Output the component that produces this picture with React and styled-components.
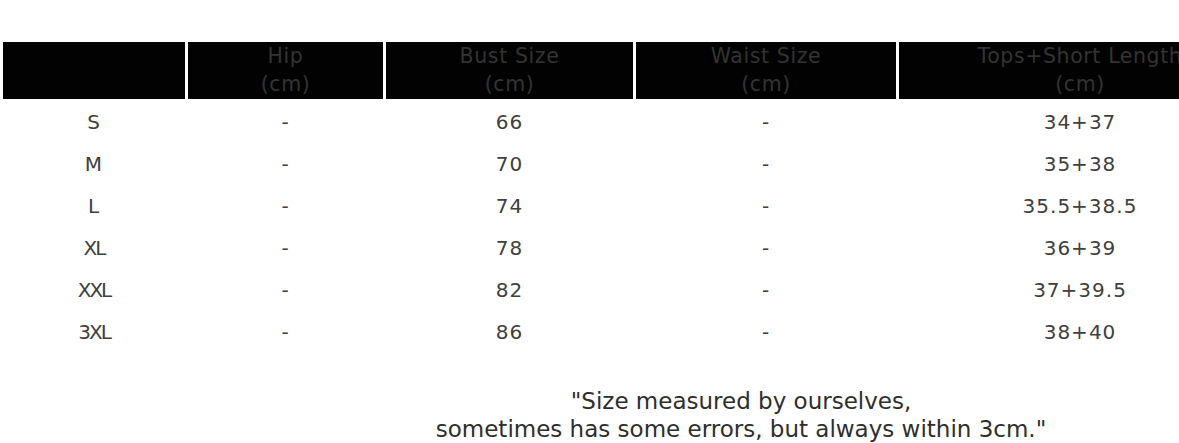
import React from "react";
import styled, { createGlobalStyle } from "styled-components";

const Global = createGlobalStyle`
  html, body { margin: 0; padding: 0; background: #fff; overflow: hidden; }
  body { font-family: "DejaVu Sans", Verdana, sans-serif; }
`;

const Page = styled.div`
  width: 1179px;
  height: 443px;
  overflow: hidden;
  padding-top: 42px;
  box-sizing: border-box;
`;

const Table = styled.div`
  display: grid;
  grid-template-columns: 182px 195px 247px 260px 362px;
  column-gap: 3px;
  padding-left: 3px;
  width: max-content;
`;

const HeadCell = styled.div`
  background: #020202;
  height: 57px;
  margin-bottom: 2px;
  display: flex;
  flex-direction: column;
  align-items: center;
  justify-content: center;
  color: #333;
  font-size: 20.5px;
  line-height: 28px;
  letter-spacing: 0.6px;
  white-space: nowrap;
  padding-bottom: 2px;
  box-sizing: border-box;
`;

const Cell = styled.div`
  height: 42px;
  display: flex;
  align-items: center;
  justify-content: center;
  color: #404040;
  font-size: 20px;
  letter-spacing: ${(p) => (p.$tight ? "-2px" : "1px")};
  white-space: nowrap;
`;

const Note = styled.div`
  margin-top: 34px;
  padding-left: 303px;
  text-align: center;
  color: #2e2e2e;
  font-size: 23px;
  line-height: 28px;
  white-space: nowrap;
`;

const NoteLine = styled.div``;

const headers = [
  [],
  ["Hip", "(cm)"],
  ["Bust Size", "(cm)"],
  ["Waist Size", "(cm)"],
  ["Tops+Short Length", "(cm)"],
];

const rows = [
  ["S", "-", "66", "-", "34+37"],
  ["M", "-", "70", "-", "35+38"],
  ["L", "-", "74", "-", "35.5+38.5"],
  ["XL", "-", "78", "-", "36+39"],
  ["XXL", "-", "82", "-", "37+39.5"],
  ["3XL", "-", "86", "-", "38+40"],
];

export default function App() {
  return (
    <Page>
      <Global />
      <Table>
        {headers.map((h, i) => (
          <HeadCell key={"h" + i}>
            {h.map((t) => (
              <span key={t}>{t}</span>
            ))}
          </HeadCell>
        ))}
        {rows.map((r) =>
          r.map((v, i) => (
            <Cell key={r[0] + i} $tight={i === 0 && v.includes("X")}>
              {v}
            </Cell>
          ))
        )}
      </Table>
      <Note>
        <NoteLine>"Size measured by ourselves,</NoteLine>
        <NoteLine>sometimes has some errors, but always within 3cm."</NoteLine>
      </Note>
    </Page>
  );
}
